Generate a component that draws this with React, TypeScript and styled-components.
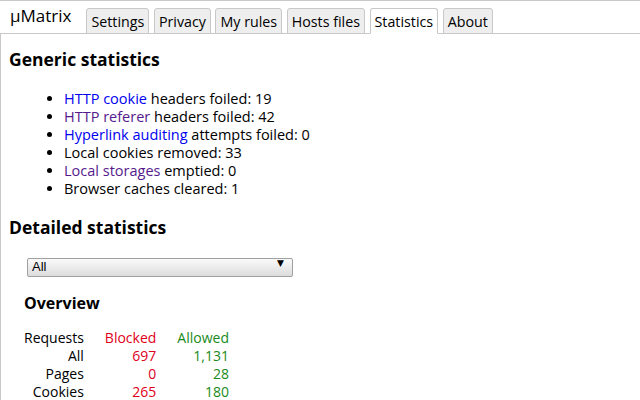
import React from "react";
import styled, { createGlobalStyle } from "styled-components";

const Global = createGlobalStyle`
  html, body { margin: 0; padding: 0; background: #fff; }
  body { font-family: "Open Sans", "Noto Sans", sans-serif; color: #000; }
`;

const TopBar = styled.div`
  display: flex;
  align-items: flex-end;
  height: 32px;
  border-top: 1px solid #c8c8c8;
  border-bottom: 1px solid #c8c8c8;
`;

const Brand = styled.div`
  font-size: 17px;
  line-height: 24px;
  padding: 0 15px 3px 10px;
  align-self: center;
`;

const Tab = styled.div<{ $active?: boolean }>`
  font-size: 14.25px;
  line-height: 24px;
  height: 26px;
  box-sizing: border-box;
  padding: 1px 4px 0;
  margin-right: 4.6px;
  margin-bottom: -1px;
  border: 1px solid #c8c8c8;
  border-bottom: ${(p) => (p.$active ? "1px solid #fff" : "1px solid #c8c8c8")};
  border-radius: 3px 3px 0 0;
  background: ${(p) => (p.$active ? "#fff" : "#eee")};
  white-space: nowrap;
`;

const Content = styled.div`
  border-left: 1px solid #c8c8c8;
  padding: 13px 8px 0;
  min-height: 366px;
  box-sizing: border-box;
`;

const H2 = styled.h2<{ $mt?: number; $mb?: number }>`
  font-size: 17.5px;
  font-weight: 700;
  margin: ${(p) => p.$mt ?? 0}px 0 ${(p) => p.$mb ?? 0}px;
  line-height: 24.5px;
`;

const List = styled.ul`
  margin: 0;
  padding-left: 55px;
  font-size: 14.5px;
  line-height: 18px;
`;

const Item = styled.li``;

const Link = styled.a<{ $visited?: boolean }>`
  color: ${(p) => (p.$visited ? "#551a8b" : "#0000ee")};
  text-decoration: none;
`;

const Detail = styled.div`
  padding-left: 15px;
`;

const SelectWrap = styled.div`
  position: relative;
  width: 266px;
  height: 19px;
  margin-left: 3px;
`;

const Select = styled.select`
  appearance: none;
  -webkit-appearance: none;
  width: 100%;
  height: 100%;
  box-sizing: border-box;
  border: 1px solid #a0a0a0;
  border-radius: 2px;
  background: linear-gradient(#fafafa, #dcdcdc);
  font-family: "Liberation Sans", Arial, sans-serif;
  font-size: 13px;
  padding: 0 0 1px 4px;
  color: #000;
  outline: none;
`;

const Arrow = styled.span`
  position: absolute;
  right: 9px;
  top: 3px;
  font-size: 9px;
  line-height: 12px;
  pointer-events: none;
  font-family: "DejaVu Sans", sans-serif;
`;

const H3 = styled.h3`
  font-size: 16px;
  font-weight: 700;
  line-height: 22px;
  margin: 19px 0 15px;
`;

const Table = styled.table`
  border-collapse: collapse;
  font-size: 14px;
  line-height: 18px;
`;

const Cell = styled.td<{ $tone?: "red" | "green"; $first?: boolean }>`
  padding: 0 0 0 ${(p) => (p.$first ? 0 : 21)}px;
  text-align: right;
  white-space: nowrap;
  color: ${(p) => (p.$tone === "red" ? "#e0001a" : p.$tone === "green" ? "#1a8a1a" : "#000")};
`;

const rows: [string, string, string][] = [
  ["All", "697", "1,131"],
  ["Pages", "0", "28"],
  ["Cookies", "265", "180"],
];

export default function App() {
  const tabs = ["Settings", "Privacy", "My rules", "Hosts files", "Statistics", "About"];
  return (
    <>
      <Global />
      <TopBar>
        <Brand>µMatrix</Brand>
        {tabs.map((t) => (
          <Tab key={t} $active={t === "Statistics"}>
            {t}
          </Tab>
        ))}
      </TopBar>
      <Content>
        <H2 $mb={18}>Generic statistics</H2>
        <List>
          <Item>
            <Link>HTTP cookie</Link> headers foiled: 19
          </Item>
          <Item>
            <Link $visited>HTTP referer</Link> headers foiled: 42
          </Item>
          <Item>
            <Link>Hyperlink auditing</Link> attempts foiled: 0
          </Item>
          <Item>Local cookies removed: 33</Item>
          <Item>
            <Link $visited>Local storages</Link> emptied: 0
          </Item>
          <Item>Browser caches cleared: 1</Item>
        </List>
        <H2 $mt={17} $mb={15}>Detailed statistics</H2>
        <Detail>
          <SelectWrap>
            <Select defaultValue="All">
              <option>All</option>
            </Select>
            <Arrow>▼</Arrow>
          </SelectWrap>
          <H3>Overview</H3>
          <Table>
            <tbody>
              <tr>
                <Cell $first>Requests</Cell>
                <Cell $tone="red">Blocked</Cell>
                <Cell $tone="green">Allowed</Cell>
              </tr>
              {rows.map((r) => (
                <tr key={r[0]}>
                  <Cell $first>{r[0]}</Cell>
                  <Cell $tone="red">{r[1]}</Cell>
                  <Cell $tone="green">{r[2]}</Cell>
                </tr>
              ))}
            </tbody>
          </Table>
        </Detail>
      </Content>
    </>
  );
}
